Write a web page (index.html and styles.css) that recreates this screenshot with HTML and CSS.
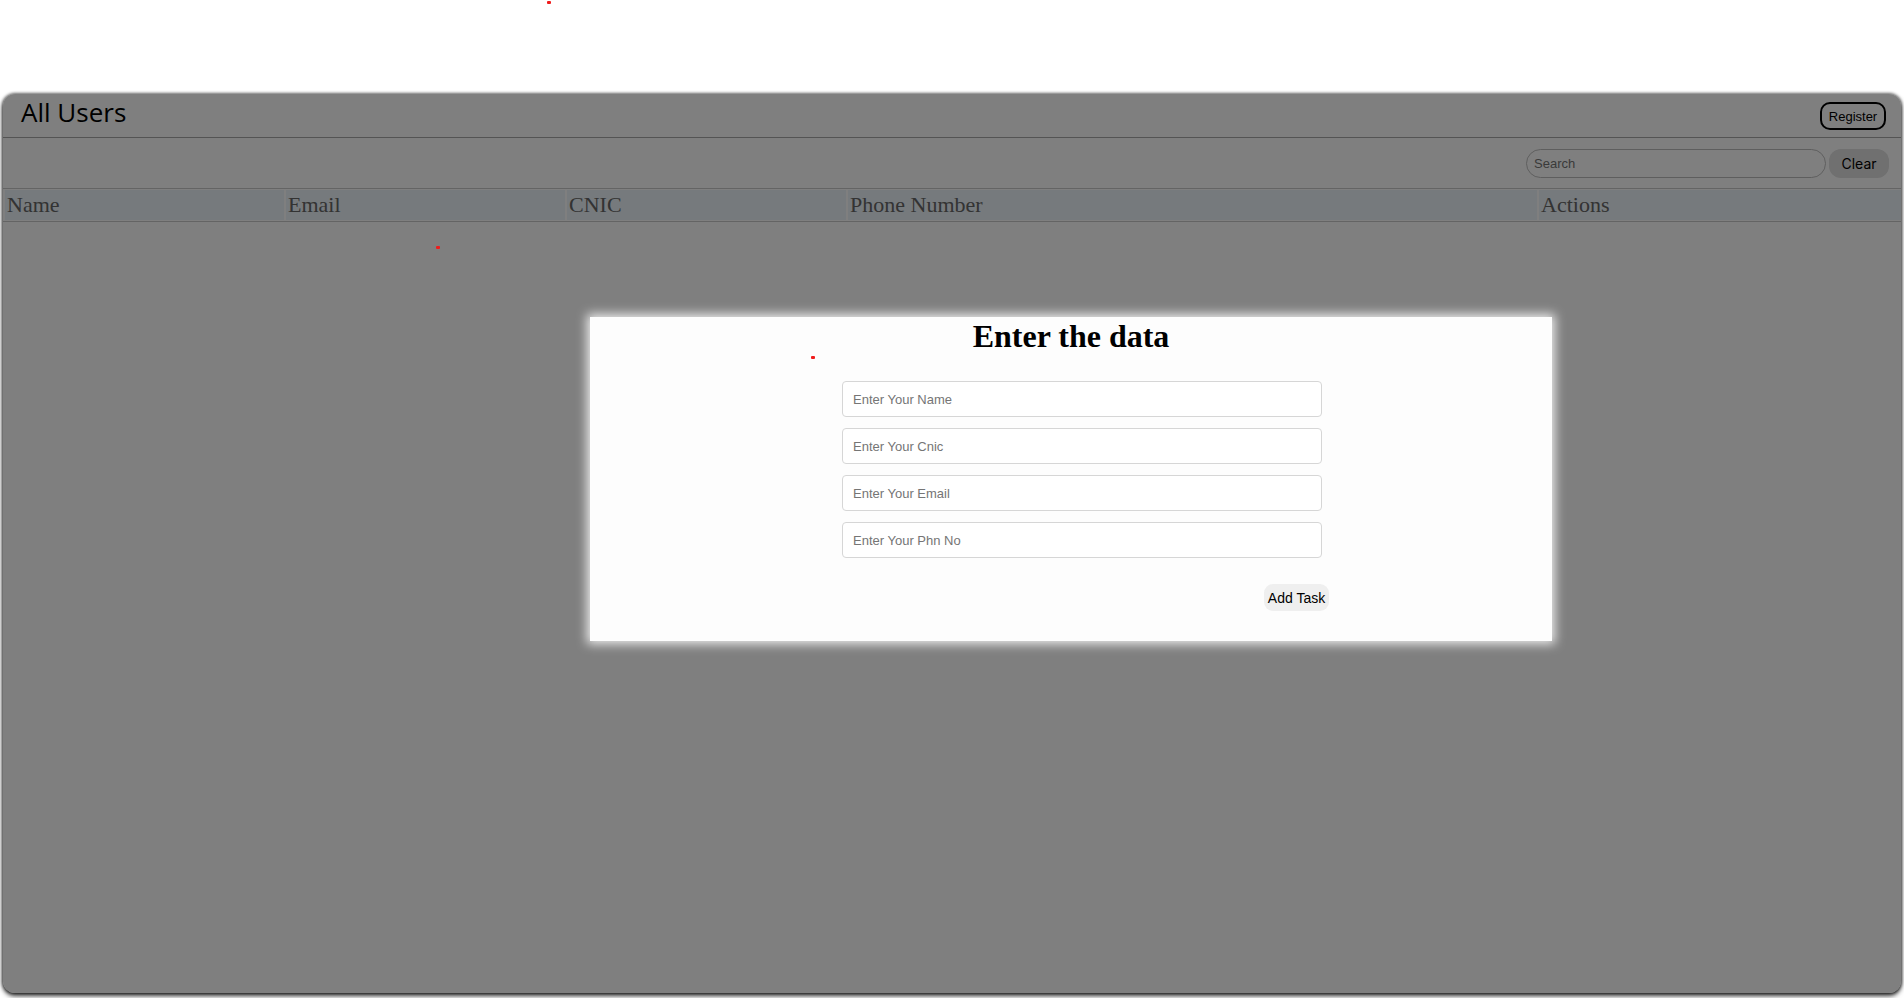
FILE: index.html
```html
<!DOCTYPE html>
<html lang="en">
<head>
<meta charset="utf-8">
<title>All Users</title>
<link rel="stylesheet" href="styles.css">
</head>
<body>
<div class="page">
  <div class="card">
    <header class="card-header">
      <h2 class="title">All Users</h2>
      <button class="btn-register">Register</button>
    </header>
    <div class="toolbar">
      <input class="search" type="text" placeholder="Search">
      <button class="btn-clear">Clear</button>
    </div>
    <div class="table-head">
      <div class="th">Name</div>
      <div class="th">Email</div>
      <div class="th">CNIC</div>
      <div class="th">Phone Number</div>
      <div class="th">Actions</div>
    </div>
    <div class="overlay"></div>
    <div class="modal">
      <h1 class="modal-title">Enter the data</h1>
      <form class="modal-form">
        <input class="field" type="text" placeholder="Enter Your Name">
        <input class="field" type="text" placeholder="Enter Your Cnic">
        <input class="field" type="text" placeholder="Enter Your Email">
        <input class="field" type="text" placeholder="Enter Your Phn No">
        <button type="button" class="btn-add">Add Task</button>
      </form>
    </div>
  </div>
  <span class="dot dot-a"></span>
  <span class="dot dot-b"></span>
  <span class="dot dot-c"></span>
</div>
</body>
</html>
```

FILE: styles.css
```css
html, body {
  margin: 0;
  padding: 0;
  background: #fff;
}

.page {
  position: relative;
  padding: 94px 3px 0 3px;
  height: 998px;
  box-sizing: border-box;
}

.card {
  position: relative;
  height: 899px;
  background: #fff;
  border-radius: 12px;
  overflow: hidden;
  box-shadow: 0 3px 5px rgba(0, 0, 0, 0.75), 0 0 3px 1px rgba(0, 0, 0, 0.55);
}

.card-header {
  display: flex;
  justify-content: space-between;
  align-items: center;
  height: 43px;
  border-bottom: 1px solid #a8a8a8;
  padding: 0 15px 0 18px;
}

.title {
  margin: 0;
  align-self: flex-start;
  margin-top: 0;
  font-family: "Open Sans", sans-serif;
  font-weight: 400;
  font-size: 26px;
  color: #000;
}

.btn-register {
  height: 28px;
  width: 66px;
  padding: 0;
  border: 2px solid #000;
  border-radius: 10px;
  background: #fff;
  font-family: "Liberation Sans", Arial, sans-serif;
  font-size: 13px;
  color: #000;
  margin-top: 1px;
}

.toolbar {
  display: flex;
  justify-content: flex-end;
  align-items: center;
  gap: 3px;
  height: 50px;
  padding: 0 12px 0 0;
  border-bottom: 1px solid #c8c8c8;
  box-sizing: content-box;
}

.search {
  width: 300px;
  height: 29px;
  box-sizing: border-box;
  border: 1px solid #bdbdbd;
  border-radius: 15px;
  padding: 0 7px;
  font-family: "Liberation Sans", Arial, sans-serif;
  font-size: 13px;
  background: #fff;
}

.search::placeholder {
  color: #757575;
}

.btn-clear {
  width: 60px;
  height: 29px;
  border: none;
  border-radius: 12px;
  background: #e0e0e0;
  font-family: "Inter", "Liberation Sans", sans-serif;
  font-size: 14px;
  color: #000;
  padding: 0;
}

.table-head {
  display: grid;
  grid-template-columns: 279px 279px 279px 1fr 362px;
  gap: 2px;
  padding: 1px 0 1px 2px;
  border-bottom: 1px solid #c8c8c8;
}

.th {
  background: #ecf4fa;
  height: 30px;
  padding: 0 2px;
  font-family: "Liberation Serif", "Times New Roman", serif;
  font-size: 22px;
  line-height: 30px;
  color: #666;
}

.overlay {
  position: absolute;
  inset: 0;
  background: rgba(0, 0, 0, 0.5);
}

.modal {
  position: absolute;
  left: 587px;
  top: 223px;
  width: 962px;
  height: 324px;
  background: #fdfdfd;
  box-shadow: 0 0 10px 3px rgba(255, 255, 255, 0.85);
}

.modal-title {
  margin: 0;
  padding-top: 1px;
  text-align: center;
  font-family: "Liberation Serif", "Times New Roman", serif;
  font-weight: 700;
  font-size: 32px;
  line-height: 37px;
  color: #000;
}

.modal-form {
  display: flex;
  flex-direction: column;
  gap: 11px;
  width: 487px;
  margin: 26px 0 0 252px;
}

.field {
  width: 480px;
  height: 36px;
  box-sizing: border-box;
  border: 1px solid #d6d6d6;
  border-radius: 4px;
  padding: 0 10px;
  font-family: "Liberation Sans", Arial, sans-serif;
  font-size: 13px;
  background: #fff;
}

.field::placeholder {
  color: #757575;
}

.btn-add {
  align-self: flex-end;
  margin-top: 15px;
  width: 65px;
  height: 27px;
  padding: 0;
  border: none;
  border-radius: 9px;
  background: #efefef;
  font-family: "Liberation Sans", Arial, sans-serif;
  font-size: 14px;
  color: #000;
}

.dot {
  position: absolute;
  width: 4px;
  height: 3px;
  border-radius: 1px;
  background: #f01c1c;
}

.dot-a { left: 547px; top: 1px; }
.dot-b { left: 436px; top: 246px; }
.dot-c { left: 811px; top: 356px; }
```
